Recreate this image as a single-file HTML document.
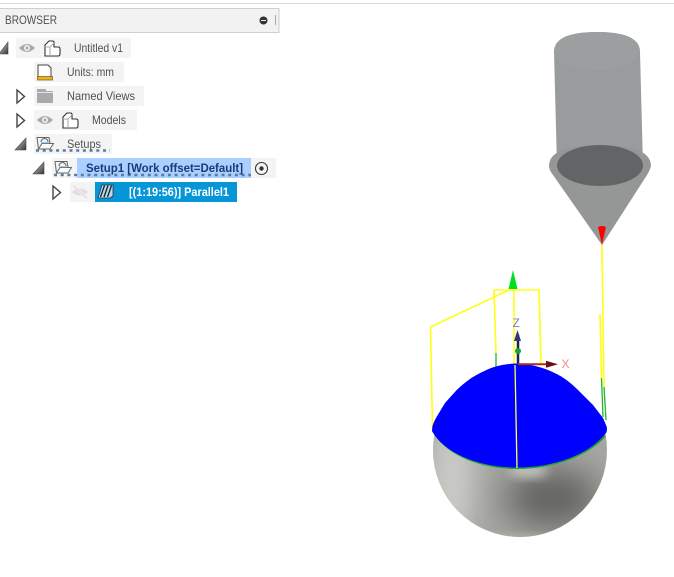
<!DOCTYPE html>
<html><head><meta charset="utf-8"><title>Browser</title>
<style>
html,body{margin:0;padding:0;background:#fff;width:674px;height:577px;overflow:hidden}
svg{display:block}
text{font-family:"Liberation Sans",sans-serif;font-size:12px;fill:#505050}
</style></head><body>
<svg width="674" height="577" viewBox="0 0 674 577" xmlns="http://www.w3.org/2000/svg">
<defs>
<clipPath id="sph"><circle cx="520" cy="450" r="87"/></clipPath>
<clipPath id="low"><rect x="420" y="430" width="200" height="120"/></clipPath>
<filter id="b12" x="-60%" y="-60%" width="220%" height="220%"><feGaussianBlur stdDeviation="13"/></filter>
<filter id="b16" x="-60%" y="-60%" width="220%" height="220%"><feGaussianBlur stdDeviation="17"/></filter>
<filter id="b6" x="-50%" y="-50%" width="200%" height="200%"><feGaussianBlur stdDeviation="5"/></filter>
<linearGradient id="tri" x1="0" y1="0" x2="1" y2="1"><stop offset="0" stop-color="#ddd"/><stop offset="1" stop-color="#333"/></linearGradient>
</defs>

<!-- top line -->
<rect x="0" y="3" width="674" height="1" fill="#dcdcdc"/>
<!-- header -->
<rect x="-1" y="8.5" width="280" height="24" fill="#f2f2f2" stroke="#cfcfcf"/>
<text x="5" y="24" textLength="52" lengthAdjust="spacingAndGlyphs" fill="#666">BROWSER</text>
<circle cx="263.500" cy="20.500" r="4" fill="#333"/><rect x="261" y="20" width="5" height="1" fill="#eee"/>
<rect x="275" y="15" width="1" height="10" fill="#aaa"/><rect x="278" y="15" width="1" height="10" fill="#ddd"/>

<!-- row backgrounds -->
<g fill="#f4f4f4">
<rect x="16" y="38" width="115" height="20"/>
<rect x="34" y="62" width="90" height="20"/>
<rect x="34" y="86" width="110" height="20"/>
<rect x="34" y="110" width="103" height="20"/>
<rect x="34" y="134" width="78" height="20"/>
<rect x="52" y="158" width="224" height="20"/>
<rect x="70" y="182" width="25" height="20"/>
</g>
<rect x="77" y="158" width="174" height="20" fill="#a9d0ff"/>
<rect x="95" y="182" width="142" height="20" fill="#0696d7"/>

<!-- expanders -->
<g fill="url(#tri)" stroke="#444" stroke-width=".6">
<path d="M-1 54 L8 42 V54Z"/>
<path d="M15 150 L26 138 V150Z"/>
<path d="M33 174 L44 162 V174Z"/>
</g>
<g fill="#fff" stroke="#444" stroke-width="1.400">
<path d="M17 90 L24.500 96.500 L17 103Z"/>
<path d="M17 114 L24.500 120.500 L17 127Z"/>
<path d="M53 186 L60.500 192.500 L53 199Z"/>
</g>

<!-- eyes -->
<g>
<path d="M19 48 Q27 40 35 48 Q27 56 19 48Z" fill="#aaa"/><circle cx="27" cy="48" r="3" fill="#f4f4f4"/><circle cx="27" cy="48" r="1.500" fill="#aaa"/>
<path d="M37 120 Q45 112 53 120 Q45 128 37 120Z" fill="#aaa"/><circle cx="45" cy="120" r="3" fill="#f4f4f4"/><circle cx="45" cy="120" r="1.500" fill="#aaa"/>
<path d="M72 192 Q80 185 88 192 Q80 199 72 192Z" fill="#dedede"/>
<path d="M74 186 L87 198" stroke="#f4f4f4" stroke-width="3"/>
<path d="M74 186 L87 198" stroke="#dedede" stroke-width="1.500"/>
</g>

<!-- component icons -->
<g fill="#fff" stroke="#333" stroke-width="1.100">
<path d="M45 56 V45 L49 41 H53 L54 42 V47 H58 Q60 47 60 49 V54 Q60 56 58 56Z"/>
<path d="M63 128 V117 L67 113 H71 L72 114 V119 H76 Q78 119 78 121 V126 Q78 128 76 128Z"/>
</g>
<g fill="none" stroke="#aaa" stroke-width="1">
<path d="M45 47 H50 L54 43 M50 47 V56"/>
<path d="M63 119 H68 L72 115 M68 119 V128"/>
</g>

<!-- units doc -->
<path d="M38 78 V65 H48 L51 68 V78" fill="#fff" stroke="#444" stroke-width="1"/>
<rect x="37.500" y="76.500" width="15" height="3.500" fill="#e9b020" stroke="#7a5a10" stroke-width=".7"/>

<!-- folder -->
<path d="M37 91 V89 H46 V91 H53 V103 H37Z" fill="#aaa"/>
<rect x="37" y="92" width="16" height="1" fill="#e4e4e4"/>

<!-- setup icons -->
<g fill="none" stroke="#666" stroke-width="1">
<path d="M38.500 149 L37 137.500 H49 L50 143"/>
<path d="M38.500 149 L42 143.500 H53.500 L50 149Z" fill="#fbfbfb"/>
<path d="M41 142 A3.500 3.500 0 1 1 48 142"/>
<path d="M56.500 173 L55 161.500 H67 L68 167"/>
<path d="M56.500 173 L60 167.500 H71.500 L68 173Z" fill="#fbfbfb"/>
<path d="M59 166 A3.500 3.500 0 1 1 66 166"/>
</g>
<path d="M41 143 H49" stroke="#4a9fd8" stroke-width="1"/>
<path d="M59 167 H67" stroke="#4a9fd8" stroke-width="1"/>
<path d="M36 150.500 H110" stroke="#5d7aa0" stroke-width="2.500" stroke-dasharray="3 3.700"/>
<path d="M54 175 H251" stroke="#5d7aa0" stroke-width="2.500" stroke-dasharray="3 3.700"/>

<!-- parallel icon -->
<path d="M98 198 L102 185 H113 L113 196 L110 198Z" fill="#bcd9ea" stroke="#333" stroke-width=".8"/>
<path d="M100.500 197 L104.500 185.500 M104 197 L108 185.500 M107.500 197 L111.500 185.500" stroke="#123" stroke-width="1.300" fill="none"/>

<!-- target -->
<circle cx="261.500" cy="168.500" r="6" fill="none" stroke="#333" stroke-width="1.100"/>
<circle cx="261.500" cy="168.500" r="2.200" fill="#333"/>

<!-- labels -->
<text x="74" y="52" textLength="49" lengthAdjust="spacingAndGlyphs">Untitled v1</text>
<text x="67" y="76" textLength="47" lengthAdjust="spacingAndGlyphs">Units: mm</text>
<text x="67" y="100" textLength="68" lengthAdjust="spacingAndGlyphs">Named Views</text>
<text x="92" y="124" textLength="34" lengthAdjust="spacingAndGlyphs">Models</text>
<text x="67" y="148" textLength="34" lengthAdjust="spacingAndGlyphs">Setups</text>
<text x="86" y="172" textLength="157" lengthAdjust="spacingAndGlyphs" style="fill:#1a3a7a;font-weight:bold">Setup1 [Work offset=Default]</text>
<text x="129" y="196" textLength="100" lengthAdjust="spacingAndGlyphs" style="fill:#fff;font-weight:bold">[(1:19:56)] Parallel1</text>

<!-- tool -->
<path d="M554 52 Q554 32 597 32 Q640 32 640 52 L643 166 H557Z" fill="#999c9d"/>
<path d="M554 52 Q560 70 597 70 Q632 70 640 52 Q640 32 597 32 Q554 32 554 52Z" fill="#9c9f9f"/>
<path d="M549 166 Q549 145 600 145 Q651 145 651 166 Q650 170 647 175 L602 245 L553 175 Q549 170 549 166Z" fill="#959696"/>
<ellipse cx="600" cy="165.500" rx="43" ry="20.500" fill="#626566"/>
<path d="M598 227 Q602 225 606 227 L602 245Z" fill="#f00"/>

<!-- sphere -->
<g clip-path="url(#low)">
<circle cx="520" cy="450" r="87" fill="#a6a6a2"/>
<g clip-path="url(#sph)">
<ellipse cx="452" cy="480" rx="22" ry="60" fill="#cbcbc7" filter="url(#b12)"/>
<ellipse cx="552" cy="498" rx="48" ry="30" fill="#62645f" filter="url(#b16)"/>
<ellipse cx="528" cy="471" rx="20" ry="6" fill="#c8c8c4" filter="url(#b6)"/>
<ellipse cx="505" cy="543" rx="70" ry="6" fill="#b8b8b4" filter="url(#b6)"/>
</g>
</g>

<!-- wires -->
<g fill="none" stroke="#ffff14" stroke-width="1.600">
<path d="M432.500 428 L430.500 327 L510 289.500"/>
<path d="M496 353 L494 290 H539 L541 365"/>
<path d="M514 290 V365"/>
<path d="M602 245 L604 387"/>
<path d="M600 314 L601.500 378"/>
</g>
<g fill="none" stroke="#1fb52f" stroke-width="1.300">
<path d="M496 353 V367"/>
<path d="M601.500 378 L603 417"/>
<path d="M604 387 L606 420"/>
</g>

<!-- blue cap -->
<path d="M432 431 C445 455 480 469 517 469 C555 469 590 455 606 436 L500 400Z" fill="#1aa52f"/>
<path d="M432.300 427 Q433 423 436.700 416.700 L445 403 L456.700 390 Q464 383 471.700 377.700 Q481 372 491.700 367.700 Q503 364 515 363.500 Q530 364 541.700 367.700 Q552 371 561.700 376.700 Q570 382 578 390 L593 405 L603 418 L606.700 426.700 Q607.500 431 606 433 C590 454 555 467.500 517 467.500 C480 467.500 445 454 432 431Z" fill="#0000ff"/>
<path d="M515 365 L517 468" stroke="#ffff60" stroke-width="1.300"/>

<!-- axes -->
<path d="M513 270 L517.500 289 H508.500Z" fill="#00e020"/>
<path d="M518 364 V335" stroke="#1a2550" stroke-width="2.500"/>
<path d="M517.500 330 L521 341 H514Z" fill="#2a3a80"/>
<circle cx="518" cy="351" r="3" fill="#1f9f3a"/>
<path d="M518 364.300 H548" stroke="#b02828" stroke-width="2"/>
<path d="M558 364.300 L546 360.800 V367.800Z" fill="#6a1010"/>
<text x="512.500" y="327" style="font-size:12px;fill:#7a7ae0">Z</text>
<text x="561.500" y="368" style="font-size:12px;fill:#f08a8a">X</text>
</svg>
</body></html>
